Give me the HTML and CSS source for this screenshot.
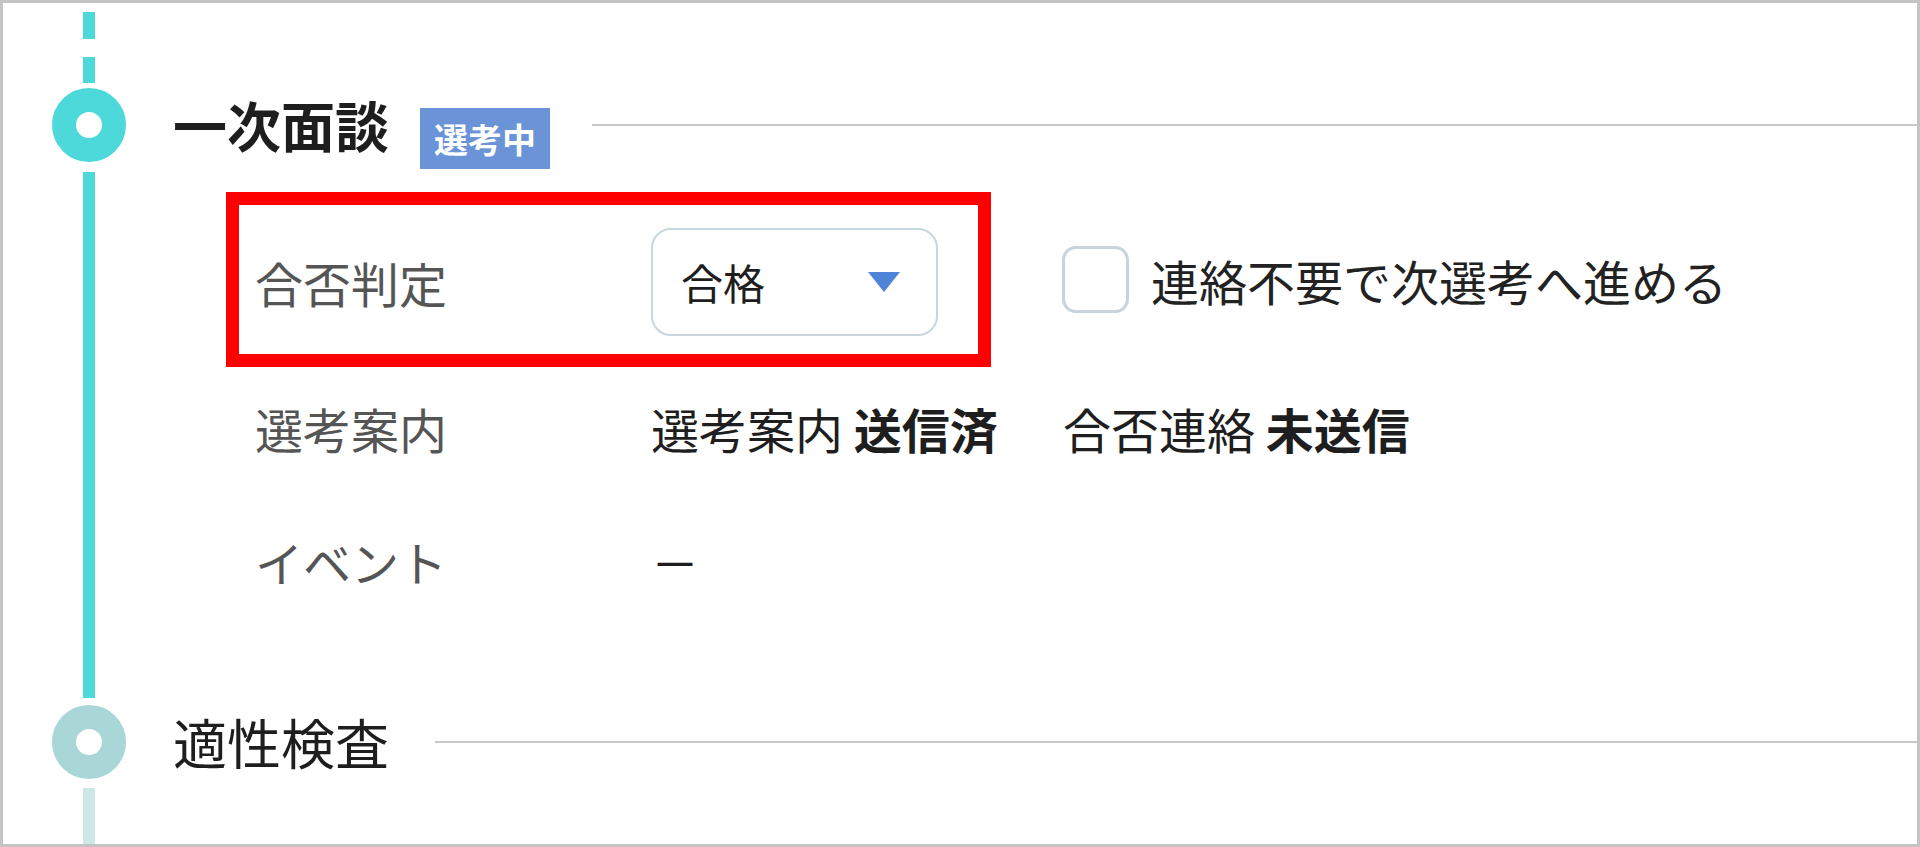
FILE: index.html
```html
<!DOCTYPE html>
<html lang="ja">
<head>
<meta charset="utf-8">
<title>選考ステップ</title>
<link rel="stylesheet" href="styles.css">
</head>
<body>
<div class="frame">
  <div class="timeline">
    <div class="rail rail-top"><span class="dash dash-a"></span><span class="dash dash-b"></span></div>
    <div class="spacer"></div>

    <div class="rail rail-node"><span class="node node-active"></span></div>
    <div class="step-head">
      <h2 class="step-title step-title-bold">一次面談</h2>
      <span class="badge">選考中</span>
      <span class="rule rule-1"></span>
    </div>

    <div class="rail rail-line"><span class="line line-active"></span></div>
    <div class="step-body">
      <div class="row row-judge">
        <div class="highlight">
          <span class="label">合否判定</span>
          <div class="select">
            <span class="select-text">合格</span>
            <svg class="select-arrow" width="32" height="20" viewBox="0 0 32 20"><path d="M0 0H32L16 20Z" fill="#4d84d8"/></svg>
          </div>
        </div>
        <label class="check">
          <span class="check-box"></span>
          <span class="check-text">連絡不要で次選考へ進める</span>
        </label>
      </div>
      <div class="row row-info">
        <span class="label">選考案内</span>
        <span class="value value-first">選考案内 <b>送信済</b></span>
        <span class="value">合否連絡 <b>未送信</b></span>
      </div>
      <div class="row row-event">
        <span class="label">イベント</span>
        <span class="value">－</span>
      </div>
    </div>

    <div class="rail rail-node"><span class="node node-next"></span></div>
    <div class="step-head">
      <h2 class="step-title">適性検査</h2>
      <span class="rule rule-2"></span>
    </div>

    <div class="rail rail-line rail-bottom"><span class="line line-next"></span></div>
    <div class="spacer"></div>
  </div>
</div>
</body>
</html>
```

FILE: styles.css
```css
* { box-sizing: border-box; }

html, body {
  margin: 0;
  padding: 0;
  background: #ffffff;
}

body {
  font-family: "Noto Sans CJK JP", "Noto Sans", sans-serif;
  color: #222222;
}

.frame {
  width: 1920px;
  height: 847px;
  border: 3px solid #c4c4c4;
  overflow: hidden;
  background: #ffffff;
}

.timeline {
  display: grid;
  grid-template-columns: 165px 1fr;
  grid-template-rows: 85px 74px 543px 74px 1fr;
  height: 100%;
}

/* ---------- rail ---------- */
.rail {
  display: flex;
  flex-direction: column;
  align-items: center;
  width: 74px;
  margin-left: 49px;
}

.rail-top {
  padding-top: 9px;
  gap: 18px;
}

.dash {
  width: 12px;
  background: #4dd9d9;
}
.dash-a { height: 27px; }
.dash-b { height: 26px; }

.node {
  width: 74px;
  height: 74px;
  border-radius: 50%;
  border: 24px solid #4dd9d9;
  background: #ffffff;
}
.node-next { border-color: #a9d7d7; }

.rail-line {
  padding: 10px 0 7px;
}
.rail-bottom {
  padding: 9px 0 0;
}

.line {
  flex: 1;
  width: 12px;
  background: #4dd9d9;
}
.line-next { background: #cfe6e6; }

/* ---------- step heading ---------- */
.step-head {
  display: flex;
  align-items: center;
  height: 74px;
  padding-left: 5px;
}

.step-title {
  margin: 0;
  font-size: 54px;
  line-height: 74px;
  font-weight: 400;
  color: #1e1e1e;
  white-space: nowrap;
}
.step-title-bold { font-weight: 700; }

.badge {
  margin-left: 31px;
  margin-top: 26px;
  height: 61px;
  padding: 0 14px;
  background: #6b94d8;
  color: #ffffff;
  font-size: 34px;
  font-weight: 700;
  line-height: 61px;
  white-space: nowrap;
}

.rule {
  flex: 1;
  height: 2px;
  background: #c8c8c8;
}
.rule-1 { margin-left: 42px; }
.rule-2 { margin-left: 46px; }

/* ---------- step body ---------- */
.step-body {
  padding-top: 30px;
}

.row {
  display: flex;
  align-items: center;
  font-size: 48px;
  line-height: 60px;
  white-space: nowrap;
}

.label {
  width: 396px;
  flex: none;
  color: #555555;
}

.highlight {
  display: flex;
  align-items: center;
  margin-left: 58px;
  border: 13px solid #ff0000;
  padding: 23px 40px 18px 16px;
}

.select {
  display: flex;
  align-items: center;
  justify-content: space-between;
  width: 287px;
  height: 108px;
  padding: 0 36px 0 28px;
  border: 2.5px solid #c8d6de;
  border-radius: 20px;
  font-size: 42px;
  color: #1e1e1e;
}

.check {
  display: flex;
  align-items: center;
  margin-left: 71px;
}

.check-box {
  width: 67px;
  height: 67px;
  border: 3px solid #c6d4dd;
  border-radius: 14px;
  flex: none;
}

.check-text {
  margin-left: 22px;
  color: #222222;
}

.row-info {
  margin-top: 31px;
  padding-left: 87px;
}

.row-event {
  margin-top: 73px;
  padding-left: 87px;
}

.value {
  color: #1e1e1e;
}
.value b { font-weight: 700; }
.value-first {
  width: 412px;
  flex: none;
}
```
